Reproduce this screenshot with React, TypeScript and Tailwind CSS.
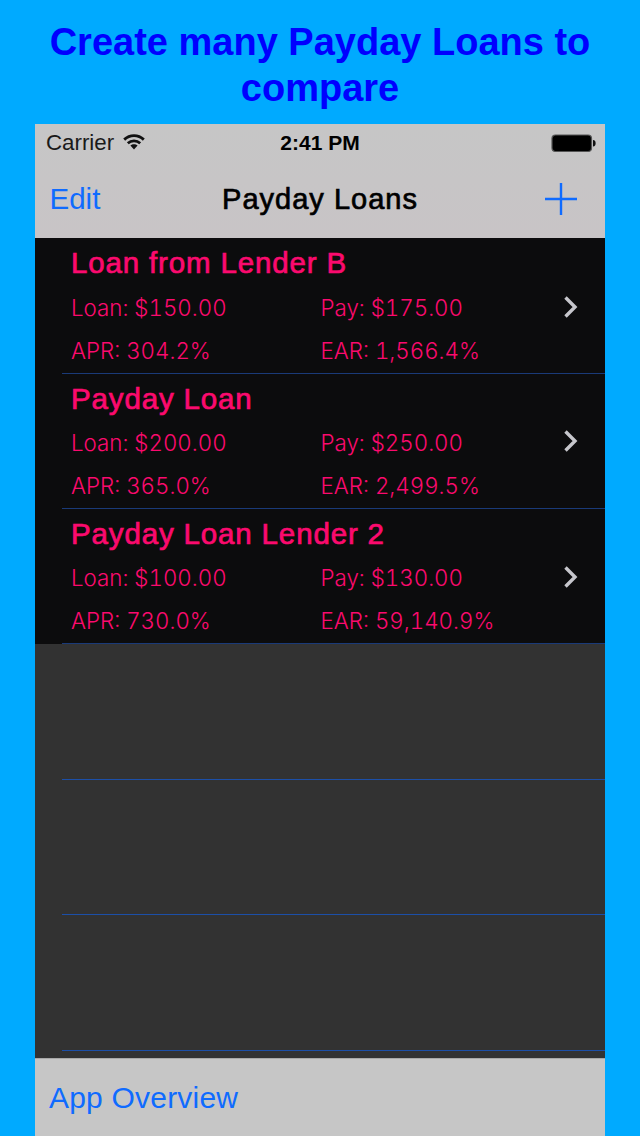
const rows = [
  { h: "h-[136px]", th: "h-[48px]", ch: "top-[56px]", title: "Loan from Lender B", loan: "Loan: $150.00", pay: "Pay: $175.00", apr: "APR: 304.2%", ear: "EAR: 1,566.4%" },
  { h: "h-[135px]", th: "h-[47px]", ch: "top-[54px]", title: "Payday Loan", loan: "Loan: $200.00", pay: "Pay: $250.00", apr: "APR: 365.0%", ear: "EAR: 2,499.5%" },
  { h: "h-[135px]", th: "h-[47px]", ch: "top-[55px]", title: "Payday Loan Lender 2", loan: "Loan: $100.00", pay: "Pay: $130.00", apr: "APR: 730.0%", ear: "EAR: 59,140.9%" },
];

function Row({ r }: { r: (typeof rows)[number] }) {
  return (
    <div className={`${r.h} relative shrink-0 bg-[#0c0c0d] pl-[36px] text-[#fb0a6e]`}>
      <div className={`${r.th} pt-[7px] text-[29.5px] font-medium leading-[35px] tracking-[0.85px] [-webkit-text-stroke:0.7px_#fb0a6e]`}>{r.title}</div>
      <div className="flex h-[43px] items-center font-['Inter',sans-serif] text-[22.3px] font-light leading-[28px] tabular-nums">
        <div className="w-[249.5px]">{r.loan}</div>
        <div>{r.pay}</div>
      </div>
      <div className="flex h-[44px] items-center font-['Inter',sans-serif] text-[22.3px] font-light leading-[28px] tabular-nums">
        <div className="w-[249.5px]">{r.apr}</div>
        <div>{r.ear}</div>
      </div>
      <svg className={`absolute left-[527px] ${r.ch}`} width="18" height="26" viewBox="0 0 18 26" fill="none">
        <path d="M3.5 3.5 L13 13 L3.5 22.5" stroke="#c7c7cc" strokeWidth="3.4" />
      </svg>
      <div className="absolute bottom-0 left-[27px] right-0 h-px bg-[#1a3a78]" />
    </div>
  );
}

function Empty({ h }: { h: string }) {
  return (
    <div className={`${h} relative shrink-0`}>
      <div className="absolute bottom-0 left-[27px] right-0 h-px bg-[#1c4fa8]" />
    </div>
  );
}

export default function App() {
  return (
    <div className="flex h-[1136px] w-[640px] flex-col overflow-hidden bg-[#00aaff] font-['Liberation_Sans',Arial,sans-serif]">
      <div className="flex h-[124px] items-start justify-center px-4 pt-[19px] text-center text-[38px] font-bold leading-[46px] text-[#0000ff]">
        <div className="w-[580px]">Create many Payday Loans to compare</div>
      </div>
      <div className="mx-[35px] flex h-[1012px] w-[570px] flex-col">
        <div className="h-[114px] shrink-0 bg-gradient-to-b from-[#c6c6c6] to-[#c8c4c6]">
          <div className="relative flex h-[38px] items-center justify-between pl-[11px] pr-[9px] text-black">
            <div className="flex items-center gap-[9px] text-[22.3px] text-[#1a1a1a]">
              <span>Carrier</span>
              <svg width="22" height="16" viewBox="0 0 22 16" fill="none" className="-mt-[3px]">
                <path d="M1.2 5.6 C6.8 0.4 15.2 0.4 20.8 5.6" stroke="#111" strokeWidth="2.8" />
                <path d="M4.8 9.2 C8.4 6 13.6 6 17.2 9.2" stroke="#111" strokeWidth="2.8" />
                <path d="M7.4 11.6 C9.4 9.8 12.6 9.8 14.6 11.6 L11 15.6 Z" fill="#111" />
              </svg>
            </div>
            <div className="absolute left-0 right-0 text-center text-[21px] font-bold">2:41 PM</div>
            <svg width="45" height="19" viewBox="0 0 45 19" fill="none">
              <rect x="1" y="1" width="39.5" height="16.5" rx="3.5" fill="#000" stroke="#555" strokeWidth="1.2" />
              <path d="M42 6 C44 6 44.6 7.5 44.6 9.2 C44.6 11 44 12.5 42 12.5 Z" fill="#111" />
            </svg>
          </div>
          <div className="relative flex h-[76px] items-center justify-between pb-[2px] pl-[14.5px] pr-[28px]">
            <span className="text-[29.5px] text-[#0f6bff]">Edit</span>
            <span className="absolute left-0 right-0 mt-[1px] text-center text-[29px] font-medium tracking-[1px] text-black [-webkit-text-stroke:0.7px_#000]">Payday Loans</span>
            <svg width="32" height="32" viewBox="0 0 32 32" fill="none" className="relative">
              <path d="M16 0 V32 M0 16 H32" stroke="#0f6bff" strokeWidth="2.4" />
            </svg>
          </div>
        </div>
        <div className="flex h-[820px] shrink-0 flex-col overflow-hidden bg-[#323232]">
          {rows.map((r) => (
            <Row key={r.title} r={r} />
          ))}
          <Empty h="h-[136px]" />
          <Empty h="h-[135px]" />
          <Empty h="h-[136px]" />
        </div>
        <div className="flex h-[78px] shrink-0 items-center border-t border-t-[#a8a8a8] bg-[#c6c6c6] pl-[14px] text-[30px] tracking-[0.2px] text-[#0f6bff]">
          App Overview
        </div>
      </div>
    </div>
  );
}
